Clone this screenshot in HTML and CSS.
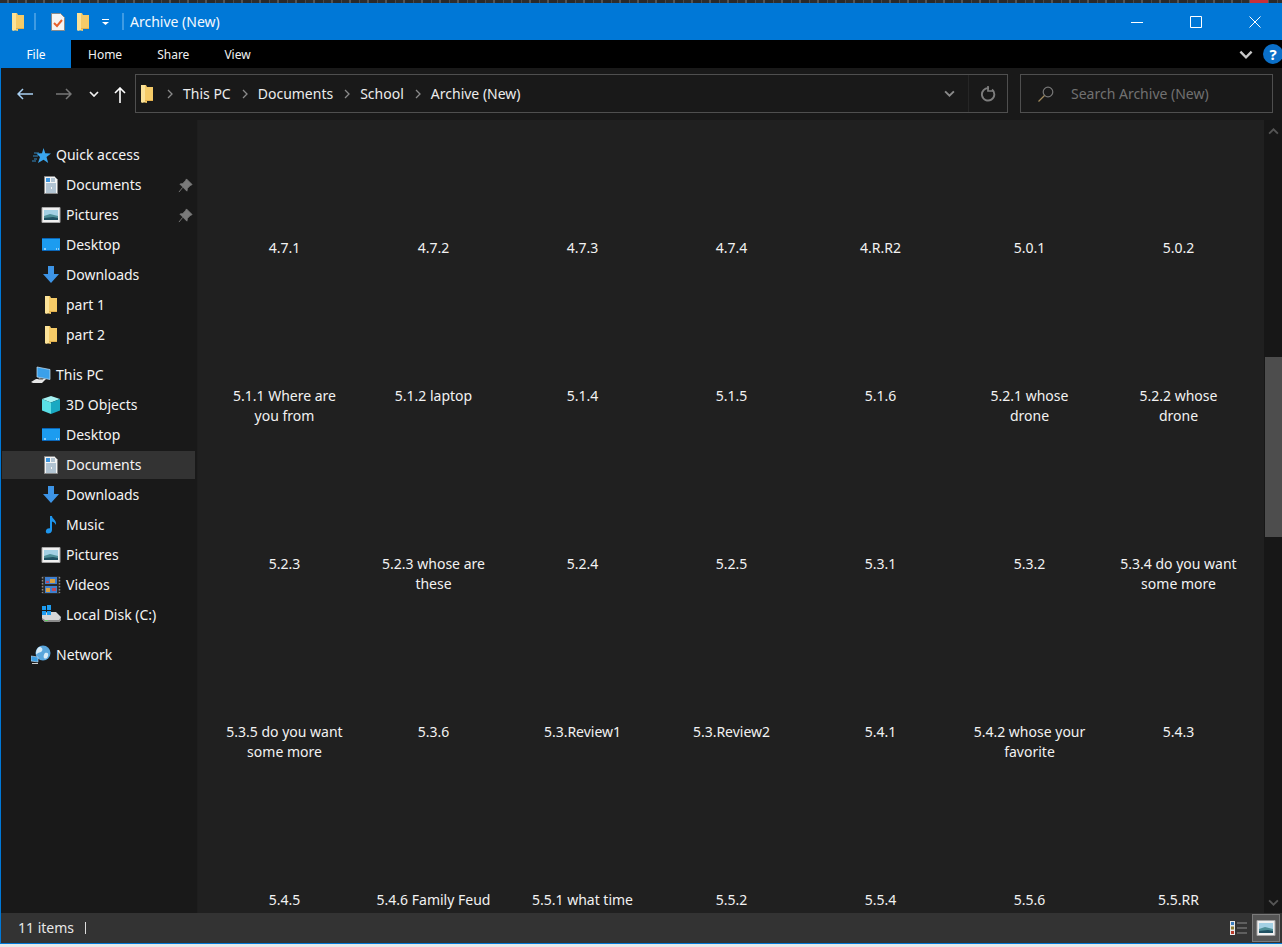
FILE: index.html
```html
<!DOCTYPE html>
<html>

<head>
  <meta http-equiv="Content-Type" content="text/html; charset=utf-8" />
  <title>Archive (New)</title>
  <link rel="stylesheet" href="styles.css">
</head>

<body>
  <svg class="icon-defs" width="0" height="0">
    <symbol id="i-folder" viewBox="0 0 12 18">
      <path d="M0 0h5l1 2h6v13H6v3l-5-1-1-1z" fill="#f5cb68" />
      <path d="M0 0h4v16.800L1 18l-1-1z" fill="#fbe298" />
      <path d="M4 15h8v1H4z" fill="#e3b04c" />
    </symbol>
    <symbol id="i-check" viewBox="0 0 14 18">
      <path d="M.5.500h9l4 4v13H.5z" fill="#f4f4f4" stroke="#8a8a8a" />
      <path d="M3 10l3 3 5-6" fill="none" stroke="#e8602c" stroke-width="2" />
    </symbol>
    <symbol id="i-star" viewBox="0 0 20 20">
      <path d="M12.500 3l1.800 5.200 5.700.3-4.500 3.500 1.700 6-4.700-3.300-5.500 3.300 2-6-3.500-3.500 5.500-.3z" fill="#3aa6ee" />
      <path d="M3 8h5M2 11h5M3 14h3M1 16h4" stroke="#3aa6ee" stroke-width=".8" />
    </symbol>
    <symbol id="i-docs" viewBox="0 0 20 20">
      <path d="M3.500 1.500h10l3 3v14h-13z" fill="#f5f5f5" stroke="#8a8a8a" />
      <path d="M5 3h4v4H5z" fill="#3c96e0" />
      <path d="M10 4h4M10 6h4M5 9h10M5 11h10M5 13h5M11 13h4M5 15h10M5 17h10" stroke="#6f93b0" />
    </symbol>
    <symbol id="i-pictures" viewBox="0 0 20 20">
      <path d="M1 2.500h18v15H1z" fill="#f0f0f0" stroke="#a5a5a5" />
      <path d="M3 5h14v10H3z" fill="#a3d0e4" />
      <path d="M3 11l6-2 8 2v4H3z" fill="#4f8f98" />
      <path d="M3 13l9-1 5 1v2H3z" fill="#1f5163" />
    </symbol>
    <symbol id="i-desktop" viewBox="0 0 20 20">
      <path d="M1 3h18v13H1z" fill="#1c9cf0" />
      <path d="M1 3h18v1H1zM1 15h18v1H1z" fill="#0a66b8" />
      <path d="M3 14h2M15 14h1M17 14h1" stroke="#fff" />
    </symbol>
    <symbol id="i-down" viewBox="0 0 20 20">
      <path d="M7 1h6v8h5l-8 9-8-9h5z" fill="#3d94e6" />
    </symbol>
    <symbol id="i-pin" viewBox="0 0 16 16">
      <path d="M9 1l6 6-2 1-3 3-.5 3L2 6.500l3-.5 3-3zM5 10l-4 5" fill="#7a7a7a" stroke="#7a7a7a" />
    </symbol>
    <symbol id="i-pc" viewBox="0 0 20 20">
      <path d="M6 2l13 2.500v10L6 12z" fill="#3aa0ea" stroke="#c7e3f7" stroke-width=".7" />
      <path d="M0 17l5-3h10l-4 4H2z" fill="#e6e6e6" />
      <path d="M8 13l4 1v1H7z" fill="#9a9a9a" />
    </symbol>
    <symbol id="i-cube" viewBox="0 0 20 20">
      <path d="M10 1l9 3-9 3.500L1 4z" fill="#a6f2f2" />
      <path d="M1 4l9 3.500V19l-9-3.500z" fill="#5adfe6" />
      <path d="M19 4l-9 3.500V19l9-3.500z" fill="#19a9c2" />
    </symbol>
    <symbol id="i-music" viewBox="0 0 20 20">
      <path d="M9 1h2c0 3 5 4 4 9-1-2-2-3-4-3.500V15c0 2.500-2 3.500-4 3.500S4.500 17 5 15.500 7.500 13 9 13.500z" fill="#1e96ee" />
    </symbol>
    <symbol id="i-videos" viewBox="0 0 20 20">
      <path d="M1 1h18v18H1z" fill="#2a2a2a" />
      <path d="M1.500 2v16M18.500 2v16" stroke="#888" stroke-dasharray="1.500 1.500" stroke-width="1.500" />
      <path d="M4 2h12v7H4z" fill="#3f7fcf" />
      <path d="M4 11h12v7H4z" fill="#3f7fcf" />
      <path d="M9 4h5v4H9zM5 13h4v4H5z" fill="#d8a040" />
      <path d="M5 6h3v2H5zM11 13h4v3h-4z" fill="#c04a5a" />
    </symbol>
    <symbol id="i-disk" viewBox="0 0 20 20">
      <path d="M1 10l5-3h9l5 5v3l-2 2H4l-3-3z" fill="#d6d6d6" />
      <path d="M1 13l3 2h14l2-3v3l-2 2H4l-3-3z" fill="#8a8a8a" />
      <path d="M4 15h3v1H4z" fill="#5fd060" />
      <path d="M1 1h4v4H1zM6 0h4v5H6zM1 6h4v4H1zM6 6h4v4H6z" fill="#1e9cf0" />
    </symbol>
    <symbol id="i-network" viewBox="0 0 20 20">
      <circle cx="12" cy="8" r="7.500" fill="#5aa6dc" />
      <path d="M8 2c3 0 4 2 3 4s-4 1-5 3-2-4 2-7zM14 8c2-1 4 0 3 3s-3 3-4 2 0-4 1-5z" fill="#d8ecf8" />
      <path d="M0 11l7 1v5l-7-1z" fill="#3a9be0" stroke="#c7e3f7" stroke-width=".6" />
      <path d="M1 18h6v1H1z" fill="#d0d0d0" />
    </symbol>
    <symbol id="i-chevron" viewBox="0 0 10 6">
      <path d="M1 1l4 4 4-4" fill="none" stroke="currentColor" stroke-width="1.700" />
    </symbol>
    <symbol id="i-crumb" viewBox="0 0 6 10">
      <path d="M1 1l4 4-4 4" fill="none" stroke="#8a8a8a" stroke-width="1.300" />
    </symbol>
  </svg>

  <div class="backdrop"><span class="backdrop-flag"></span></div>

  <div class="window">
    <header class="titlebar">
      <svg class="qat-folder"><use href="#i-folder" /></svg>
      <span class="qat-sep"></span>
      <svg class="qat-check"><use href="#i-check" /></svg>
      <svg class="qat-folder qat-gap"><use href="#i-folder" /></svg>
      <svg class="qat-menu" viewBox="0 0 7 6">
        <path d="M0 0h7v1H0z" fill="#fff" />
        <path d="M0 3h7L3.500 6z" fill="#fff" />
      </svg>
      <span class="qat-sep qat-sep-last"></span>
      <span class="title">Archive (New)</span>
      <div class="window-buttons">
        <svg class="win-btn" viewBox="0 0 12 12"><path d="M0 6.500h12" stroke="#fff" /></svg>
        <svg class="win-btn" viewBox="0 0 12 12"><path d="M.5.500h11v11H.5z" fill="none" stroke="#fff" /></svg>
        <svg class="win-btn" viewBox="0 0 12 12"><path d="M.5.500l11 11M11.500.500l-11 11" stroke="#fff" /></svg>
      </div>
    </header>

    <nav class="ribbon">
      <span class="tab tab-file">File</span>
      <span class="tab">Home</span>
      <span class="tab">Share</span>
      <span class="tab">View</span>
      <svg class="ribbon-chevron"><use href="#i-chevron" /></svg>
      <span class="help">?</span>
    </nav>

    <div class="addressbar">
      <svg class="nav-arrow nav-back" viewBox="0 0 16 12">
        <path d="M16 6H1M6 1L1 6l5 5" fill="none" stroke="#a9d0f2" stroke-width="1.500" />
      </svg>
      <svg class="nav-arrow nav-forward" viewBox="0 0 16 12">
        <path d="M0 6h15M10 1l5 5-5 5" fill="none" stroke="#777" stroke-width="1.500" />
      </svg>
      <svg class="nav-recent"><use href="#i-chevron" /></svg>
      <svg class="nav-up" viewBox="0 0 12 16">
        <path d="M6 16V1M1 6l5-5 5 5" fill="none" stroke="#fff" stroke-width="1.600" />
      </svg>

      <div class="pathbox">
        <svg class="path-folder"><use href="#i-folder" /></svg>
        <svg class="crumb-sep"><use href="#i-crumb" /></svg>
        <span class="crumb">This PC</span>
        <svg class="crumb-sep"><use href="#i-crumb" /></svg>
        <span class="crumb">Documents</span>
        <svg class="crumb-sep"><use href="#i-crumb" /></svg>
        <span class="crumb">School</span>
        <svg class="crumb-sep"><use href="#i-crumb" /></svg>
        <span class="crumb">Archive (New)</span>
        <svg class="path-history"><use href="#i-chevron" /></svg>
        <span class="path-refresh">
          <svg class="refresh-icon" viewBox="0 0 16 16">
            <path d="M12 3.500a6.200 6.200 0 1 1-3-1.300" fill="none" stroke="#7d7d7d" stroke-width="1.900" />
            <path d="M8 0v5h5" fill="none" stroke="#7d7d7d" stroke-width="1.700" />
          </svg>
        </span>
      </div>

      <div class="searchbox">
        <svg class="search-icon" viewBox="0 0 16 16">
          <circle cx="10" cy="6" r="4.800" fill="none" stroke="#777" stroke-width="1.200" />
          <path d="M6.500 9.500L.5 15.500" stroke="#a08a5c" stroke-width="1.200" />
        </svg>
        <span class="search-text">Search Archive (New)</span>
      </div>
    </div>

    <div class="main">
      <aside class="sidebar">
        <a class="nav-item nav-head"><svg class="nav-icon"><use href="#i-star" /></svg>Quick access</a>
        <a class="nav-item"><svg class="nav-icon"><use href="#i-docs" /></svg>Documents<svg class="pin"><use href="#i-pin" /></svg></a>
        <a class="nav-item"><svg class="nav-icon"><use href="#i-pictures" /></svg>Pictures<svg class="pin"><use href="#i-pin" /></svg></a>
        <a class="nav-item"><svg class="nav-icon"><use href="#i-desktop" /></svg>Desktop</a>
        <a class="nav-item"><svg class="nav-icon"><use href="#i-down" /></svg>Downloads</a>
        <a class="nav-item"><svg class="nav-icon nav-folder"><use href="#i-folder" /></svg>part 1</a>
        <a class="nav-item"><svg class="nav-icon nav-folder"><use href="#i-folder" /></svg>part 2</a>

        <a class="nav-item nav-head nav-group"><svg class="nav-icon"><use href="#i-pc" /></svg>This PC</a>
        <a class="nav-item"><svg class="nav-icon"><use href="#i-cube" /></svg>3D Objects</a>
        <a class="nav-item"><svg class="nav-icon"><use href="#i-desktop" /></svg>Desktop</a>
        <a class="nav-item selected"><svg class="nav-icon"><use href="#i-docs" /></svg>Documents</a>
        <a class="nav-item"><svg class="nav-icon"><use href="#i-down" /></svg>Downloads</a>
        <a class="nav-item"><svg class="nav-icon"><use href="#i-music" /></svg>Music</a>
        <a class="nav-item"><svg class="nav-icon"><use href="#i-pictures" /></svg>Pictures</a>
        <a class="nav-item"><svg class="nav-icon"><use href="#i-videos" /></svg>Videos</a>
        <a class="nav-item"><svg class="nav-icon"><use href="#i-disk" /></svg>Local Disk (C:)</a>

        <a class="nav-item nav-head nav-group"><svg class="nav-icon"><use href="#i-network" /></svg>Network</a>
      </aside>

      <section class="files">
        <div class="file">4.7.1</div>
        <div class="file">4.7.2</div>
        <div class="file">4.7.3</div>
        <div class="file">4.7.4</div>
        <div class="file">4.R.R2</div>
        <div class="file">5.0.1</div>
        <div class="file">5.0.2</div>

        <div class="file">5.1.1 Where are<br>you from</div>
        <div class="file">5.1.2 laptop</div>
        <div class="file">5.1.4</div>
        <div class="file">5.1.5</div>
        <div class="file">5.1.6</div>
        <div class="file">5.2.1 whose<br>drone</div>
        <div class="file">5.2.2 whose<br>drone</div>

        <div class="file">5.2.3</div>
        <div class="file">5.2.3 whose are<br>these</div>
        <div class="file">5.2.4</div>
        <div class="file">5.2.5</div>
        <div class="file">5.3.1</div>
        <div class="file">5.3.2</div>
        <div class="file">5.3.4 do you want<br>some more</div>

        <div class="file">5.3.5 do you want<br>some more</div>
        <div class="file">5.3.6</div>
        <div class="file">5.3.Review1</div>
        <div class="file">5.3.Review2</div>
        <div class="file">5.4.1</div>
        <div class="file">5.4.2 whose your<br>favorite</div>
        <div class="file">5.4.3</div>

        <div class="file">5.4.5</div>
        <div class="file">5.4.6 Family Feud</div>
        <div class="file">5.5.1 what time</div>
        <div class="file">5.5.2</div>
        <div class="file">5.5.4</div>
        <div class="file">5.5.6</div>
        <div class="file">5.5.RR</div>
      </section>

      <div class="scrollbar">
        <svg class="scroll-arrow"><use href="#i-chevron" /></svg>
        <div class="scroll-thumb"></div>
        <svg class="scroll-arrow scroll-arrow-down"><use href="#i-chevron" /></svg>
      </div>
    </div>

    <footer class="statusbar">
      <span class="item-count">11 items</span>
      <span class="status-sep"></span>
      <svg class="view-details" viewBox="0 0 18 14">
        <path d="M0 0h5v14H0z" fill="#e8e8e8" />
        <path d="M1 1h3v3H1z" fill="#3c7fc0" />
        <path d="M1 5.500h3v3H1z" fill="#8a7a30" />
        <path d="M1 10h3v3H1z" fill="#b83a2a" />
        <path d="M7 2h10M7 7h10M7 12h10" stroke="#8c8c8c" />
      </svg>
      <span class="view-tiles">
        <svg class="view-tiles-icon" viewBox="0 0 20 20"><use href="#i-pictures" /></svg>
      </span>
    </footer>
  </div>
</body>

</html>
```

FILE: styles.css
```css
* {
  box-sizing: border-box;
}

html,
body {
  margin: 0;
  height: 947px;
  overflow: hidden;
  background: #e9e9e9;
}

body {
  font-family: "Noto Sans", "Open Sans", sans-serif;
  font-size: 14px;
  line-height: 20px;
  color: #f2f2f2;
}

.icon-defs {
  display: block;
  height: 0;
}

.backdrop {
  display: flex;
  justify-content: flex-end;
  height: 3px;
  padding-right: 14px;
  background: repeating-linear-gradient(90deg, #2e2e2e 0 7px, #555 7px 9px, #2a2a2a 9px 17px, #4a4a4a 17px 18px);
}

.backdrop-flag {
  width: 18px;
  background: #c8303a;
}

.window {
  display: flex;
  flex-direction: column;
  height: 941px;
  border-left: 1px solid #0078d7;
  border-bottom: 1px solid #0078d7;
}

/* title bar */
.titlebar {
  display: flex;
  align-items: center;
  flex: none;
  height: 37px;
  padding-left: 11px;
  background: #0078d7;
}

.qat-folder {
  width: 12px;
  height: 18px;
}

.qat-sep {
  width: 2px;
  height: 17px;
  margin-left: 10px;
  background: #3f9be3;
}

.qat-check {
  width: 14px;
  height: 18px;
  margin-left: 15px;
}

.qat-gap {
  margin-left: 12px;
}

.qat-menu {
  width: 7px;
  height: 6px;
  margin-left: 13px;
}

.qat-sep-last {
  margin-left: 13px;
}

.title {
  margin-left: 6px;
  color: #f4f9fd;
}

.window-buttons {
  display: flex;
  gap: 47px;
  margin-left: auto;
  margin-right: 21px;
}

.win-btn {
  width: 12px;
  height: 12px;
}

/* ribbon */
.ribbon {
  display: flex;
  align-items: center;
  flex: none;
  height: 28px;
  background: #000;
  font-size: 12px;
}

.tab {
  height: 28px;
  padding: 1px 17px 0;
  margin-right: 1px;
  line-height: 28px;
  color: #f0f0f0;
}

.tab-file {
  width: 70px;
  padding: 1px 0 0;
  margin-right: 0;
  text-align: center;
  background: #0078d7;
  color: #fff;
}

.ribbon-chevron {
  width: 14px;
  height: 9px;
  margin-left: auto;
  margin-right: 10px;
  color: #c8c8c8;
}

.help {
  width: 20px;
  height: 20px;
  border-radius: 50%;
  margin-right: -1px;
  background: #0a6fc8;
  color: #fff;
  font-size: 15px;
  font-weight: 700;
  line-height: 20px;
  text-align: center;
}

/* address bar */
.addressbar {
  display: flex;
  align-items: center;
  flex: none;
  height: 52px;
  padding-bottom: 1px;
  background: #191919;
}

.nav-arrow {
  width: 16px;
  height: 12px;
}

.nav-back {
  margin-left: 16px;
}

.nav-forward {
  margin-left: 23px;
}

.nav-recent {
  width: 10px;
  height: 6px;
  margin-left: 17px;
  color: #f0f0f0;
}

.nav-up {
  width: 12px;
  height: 16px;
  margin-left: 15px;
  margin-top: 3px;
}

.pathbox {
  display: flex;
  align-items: center;
  width: 873px;
  height: 39px;
  margin-left: 9px;
  padding-left: 5px;
  border: 1px solid #4f4f4f;
}

.path-folder {
  width: 12px;
  height: 18px;
  margin-right: 3px;
}

.crumb-sep {
  width: 6px;
  height: 10px;
  margin: 0 10px 0 11px;
}

.crumb {
  color: #ececec;
}

.path-history {
  width: 11px;
  height: 7px;
  margin-left: auto;
  margin-right: 13px;
  color: #8a8a8a;
}

.path-refresh {
  display: flex;
  align-items: center;
  justify-content: center;
  width: 39px;
  height: 37px;
  border-left: 1px solid #262626;
}

.refresh-icon {
  width: 16px;
  height: 16px;
}

.searchbox {
  display: flex;
  align-items: center;
  width: 253px;
  height: 39px;
  margin-left: 12px;
  padding-left: 17px;
  border: 1px solid #4f4f4f;
}

.search-icon {
  width: 16px;
  height: 16px;
}

.search-text {
  margin-left: 17px;
  color: #717171;
}

/* main area */
.main {
  display: flex;
  flex: 1;
  min-height: 0;
}

.sidebar {
  flex: none;
  width: 197px;
  padding: 20px 2px 0 0;
  background: #191919;
  border-right: 1px solid #1e1e1e;
}

.nav-item {
  display: flex;
  align-items: center;
  height: 30px;
  margin-left: 1px;
  padding: 1px 0 1px 39px;
  background-clip: content-box;
  color: #f4f4f4;
}

.nav-head {
  padding-left: 29px;
}

.nav-group {
  margin-top: 10px;
}

.selected {
  padding-left: 0;
  background: #333;
  background-clip: content-box;
}

.selected .nav-icon {
  margin-left: 39px;
}

.nav-icon {
  flex: none;
  width: 20px;
  height: 20px;
  margin-right: 5px;
}

.nav-folder {
  width: 12px;
  height: 18px;
  margin-left: 4px;
  margin-right: 9px;
}

.pin {
  width: 15px;
  height: 15px;
  margin-left: auto;
  margin-right: 2px;
}

.files {
  display: grid;
  grid-template-columns: repeat(7, 149px);
  align-content: start;
  flex: 1;
  min-width: 0;
  overflow: hidden;
  padding-left: 12px;
  background: #202020;
}

.file {
  padding: 118px 4px 10px;
  text-align: center;
  color: #f2f2f2;
}

.scrollbar {
  display: flex;
  flex-direction: column;
  align-items: center;
  flex: none;
  width: 18px;
  padding-left: 1px;
  background: #171717;
}

.scroll-arrow {
  flex: none;
  width: 11px;
  height: 7px;
  margin-top: 8px;
  color: #555;
  transform: rotate(180deg);
}

.scroll-thumb {
  flex: none;
  width: 100%;
  height: 180px;
  margin-top: 222px;
  background: #4d4d4d;
}

.scroll-arrow-down {
  margin-top: auto;
  margin-bottom: 7px;
  transform: none;
}

/* status bar */
.statusbar {
  display: flex;
  align-items: center;
  flex: none;
  height: 30px;
  padding-left: 17px;
  background: #333;
}

.item-count {
  color: #e8e8e8;
}

.status-sep {
  width: 1px;
  height: 12px;
  margin-left: 11px;
  background: #ddd;
}

.view-details {
  width: 18px;
  height: 14px;
  margin-left: auto;
  margin-right: 4px;
}

.view-tiles {
  display: flex;
  align-items: center;
  justify-content: center;
  width: 28px;
  height: 28px;
  margin-right: 2px;
  background: #555;
  border: 1px solid #7a7a7a;
}

.view-tiles-icon {
  width: 20px;
  height: 20px;
}
```
